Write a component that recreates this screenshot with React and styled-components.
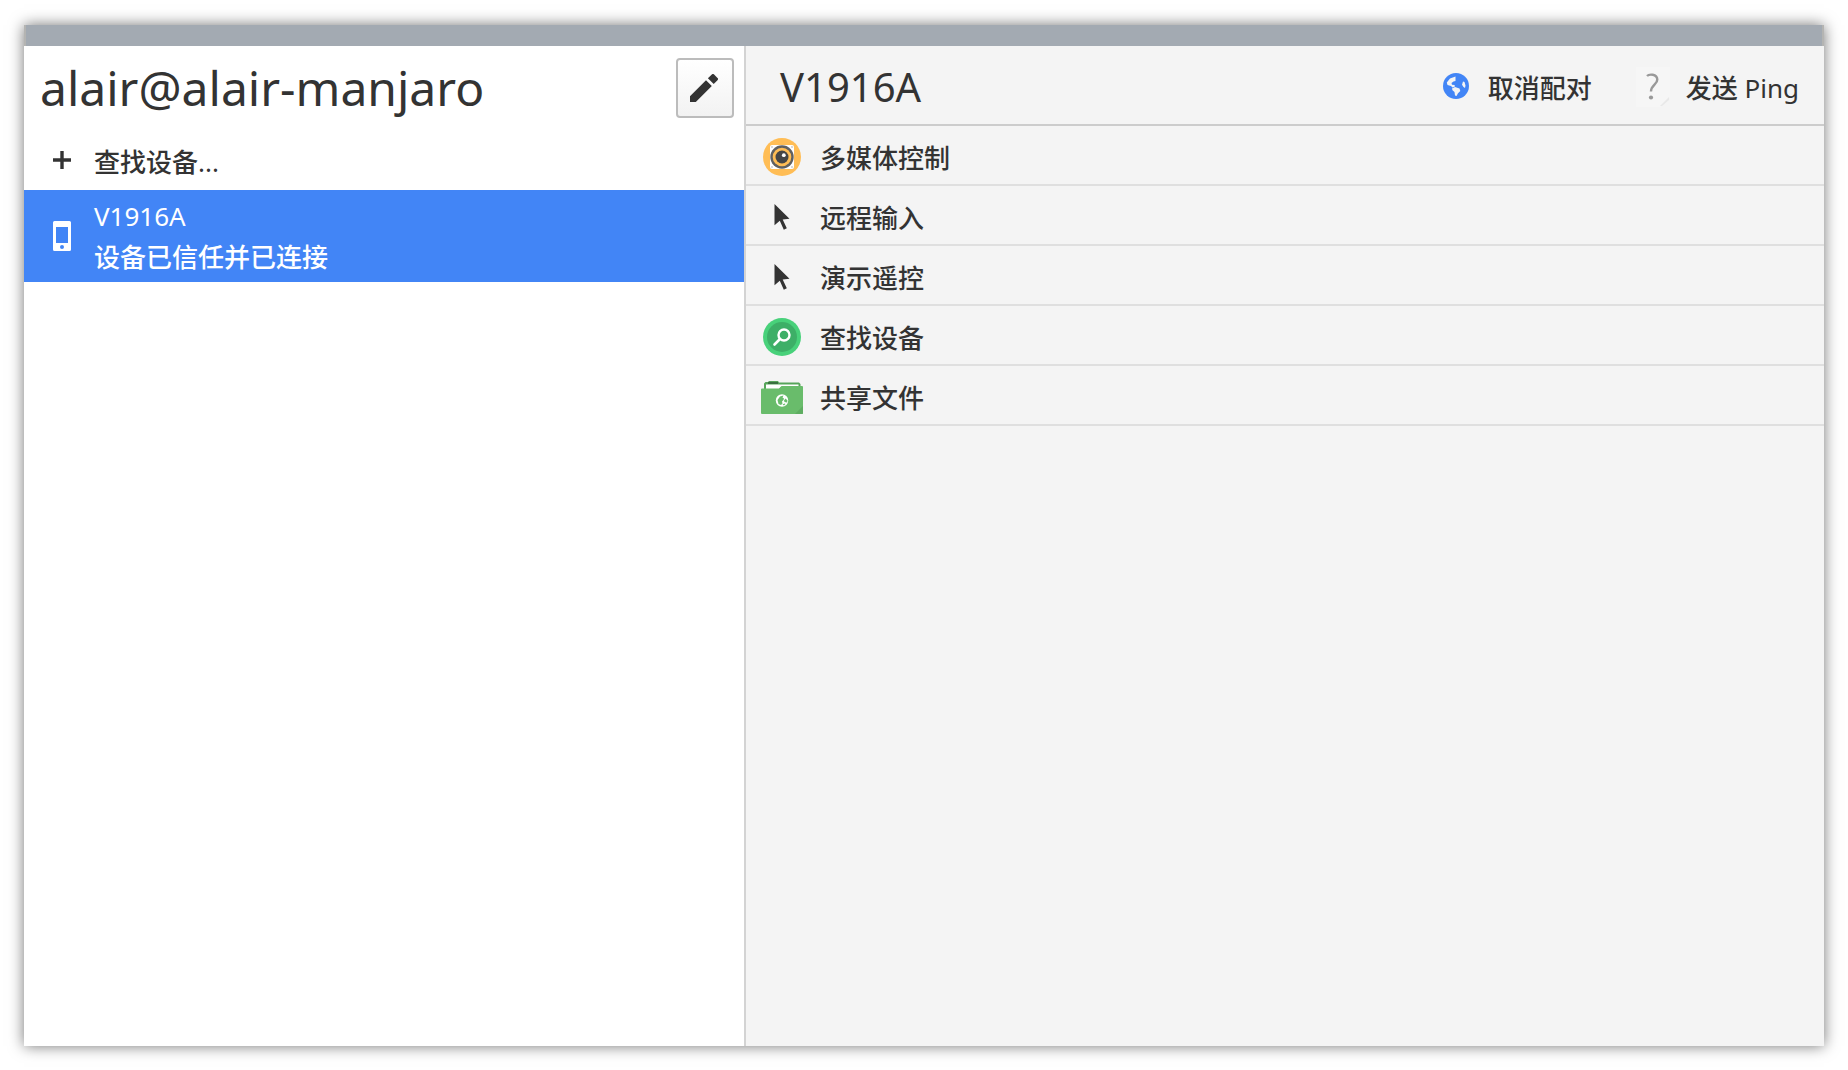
import React from "react";
import styled, { createGlobalStyle } from "styled-components";

const ink = "#333333";
const accent = "#4285f6";

const GlobalStyle = createGlobalStyle`
  *, *::before, *::after { box-sizing: border-box; }
  body {
    margin: 0;
    background: #ffffff;
    color: ${ink};
    font-family: "Noto Sans", "Noto Sans CJK SC", sans-serif;
    font-size: 26px;
    line-height: 40px;
  }
`;

const Desktop = styled.div`
  display: flex;
  min-height: 100vh;
  padding: 25px 24px 24px;
`;

const Window = styled.div`
  flex: 1;
  display: flex;
  flex-direction: column;
  box-shadow: 0 0 14px rgba(0, 0, 0, 0.55);
`;

const TitleBar = styled.header`
  height: 21px;
  background: #a3aab2;
  border: solid #b4b4b2;
  border-width: 0 2px;
`;

const Body = styled.div`
  flex: 1;
  display: grid;
  grid-template-columns: minmax(320px, 2fr) minmax(0, 3fr);
`;

const Sidebar = styled.aside`
  background: #ffffff;
`;

const Identity = styled.div`
  display: flex;
  align-items: center;
  justify-content: space-between;
  height: 88px;
  padding: 0 10px 4px 16px;
`;

const HostName = styled.h1`
  margin: 0;
  font-size: 48px;
  line-height: 64px;
  font-weight: 400;
`;

const EditButton = styled.button`
  display: flex;
  align-items: center;
  justify-content: center;
  width: 58px;
  height: 60px;
  padding: 0 2px 0 0;
  color: ${ink};
  border: 2px solid #bcbcbc;
  border-radius: 4px;
  background: linear-gradient(#ffffff, #f2f2f2);
`;

const List = styled.ul`
  margin: 0;
  padding: 0;
  list-style: none;
`;

const RowButton = styled.button`
  display: flex;
  align-items: center;
  width: 100%;
  border: 0;
  background: none;
  color: inherit;
  font: inherit;
  text-align: left;
`;

const DeviceButton = styled(RowButton)`
  gap: 10px;
  min-height: ${(p) => (p.$selected ? "92px" : "56px")};
  padding: ${(p) => (p.$selected ? "0 16px" : "0 16px 2px")};
  background: ${(p) => (p.$selected ? accent : "transparent")};
  color: ${(p) => (p.$selected ? "#ffffff" : ink)};
`;

const ActionButton = styled(RowButton)`
  gap: 16px;
  height: 60px;
  padding: 4px 14px 0;
  border-bottom: 2px solid #dfdfdf;
`;

const IconSlot = styled.span`
  display: flex;
  flex: none;
  justify-content: center;
  width: ${(p) => p.$width || 44}px;
`;

const Lines = styled.span`
  display: flex;
  flex-direction: column;
  line-height: 39px;
`;

const Label = styled.span`
  white-space: pre;
`;

const Han = styled.span`
  font-family: "Noto Sans CJK SC", sans-serif;
  font-weight: 500;
`;

const Detail = styled.main`
  background: #f4f4f4;
  border-left: 2px solid #d3d3d3;
`;

const DetailHeader = styled.div`
  display: flex;
  align-items: center;
  justify-content: space-between;
  height: 80px;
  padding: 4px 25px 0 34px;
  border-bottom: 2px solid #cccccc;
`;

const DeviceName = styled.h2`
  margin: 0;
  font-size: 40px;
  line-height: 56px;
  font-weight: 400;
`;

const Toolbar = styled.div`
  display: flex;
  gap: 44px;
`;

const ToolButton = styled.button`
  display: flex;
  align-items: center;
  gap: 16px;
  padding: 0;
  border: 0;
  background: none;
  color: inherit;
  font: inherit;
`;

const PencilIcon = () => (
  <svg width="28" height="28" viewBox="0 0 28 28" aria-hidden="true">
    <path fill="currentColor" d="M0 22.2V28h5.8L21.8 12 16 6.2zM17.9 4.3 21.8.5a1.6 1.6 0 0 1 2.3 0l3.4 3.4a1.6 1.6 0 0 1 0 2.3L23.7 10z" />
  </svg>
);

const PlusIcon = () => (
  <svg width="18" height="20" viewBox="0 0 18 20" aria-hidden="true">
    <path fill="currentColor" d="M7.3 0h3.4v7.3H18v3.4h-7.3V18H7.3v-7.3H0V7.3h7.3z" />
  </svg>
);

const PhoneIcon = () => (
  <svg width="18" height="30" viewBox="0 0 18 30" aria-hidden="true">
    <path fill="currentColor" fillRule="evenodd" d="M1.5 0h15A1.5 1.5 0 0 1 18 1.5v27a1.5 1.5 0 0 1-1.5 1.500h-15A1.5 1.5 0 0 1 0 28.500v-27A1.5 1.5 0 0 1 1.500 0zM3 6v16h12V6zM9 24a2 2 0 1 0 0 4 2 2 0 0 0 0-4z" />
  </svg>
);

const SpeakerIcon = () => (
  <svg width="38" height="38" viewBox="0 0 38 38" aria-hidden="true">
    <circle cx="19" cy="19" r="19" fill="#ffbd55" />
    <rect x="7" y="7" width="24" height="24" rx="2" fill="#ffffff" />
    <g fill="#aaaaaa">
      <circle cx="9" cy="9" r=".8" /><circle cx="29" cy="9" r=".8" />
      <circle cx="9" cy="29" r=".8" /><circle cx="29" cy="29" r=".8" />
    </g>
    <circle cx="19" cy="19" r="11.7" fill="#606060" />
    <circle cx="19" cy="19" r="9.3" fill="#ffbd55" />
    <circle cx="19" cy="19" r="6.5" fill="#464646" />
    <circle cx="20.8" cy="17.2" r="1.9" fill="#ffffff" />
  </svg>
);

const CursorIcon = () => (
  <svg width="16" height="26" viewBox="0 0 16 26" aria-hidden="true">
    <path fill={ink} d="M.5 0v21.200l5.300-4.400 4 8.900 3-1.400-4.100-8.800 6.800-.8z" />
  </svg>
);

const FindIcon = () => (
  <svg width="38" height="38" viewBox="0 0 38 38" aria-hidden="true">
    <circle cx="19" cy="19" r="19" fill="#48d17a" />
    <circle cx="19" cy="19" r="15" fill="#3daf67" />
    <path d="M16.500 21.500 11.500 26.500" stroke="#ffffff" strokeWidth="2.6" strokeLinecap="round" />
    <circle cx="21" cy="17" r="5.500" fill="none" stroke="#ffffff" strokeWidth="2.4" />
  </svg>
);

const FolderIcon = () => (
  <svg width="42" height="33" viewBox="0 0 42 33" aria-hidden="true">
    <path fill="#56a45a" d="M3 8V2.500L4.500 1H7l1-1h9l1 1.500h20L39.500 3v6H3z" />
    <path fill="#3a7040" d="M7 1h10v2H7z" />
    <path fill="#ffffff" d="M5 3.500h32.500V6H20l-2 2H5z" />
    <path fill="#69bc6b" d="M0 8.500Q0 7.500 1 7.500h17L20.500 5H41q1 0 1 1v26q0 1-1 1H1q-1 0-1-1z" />
    <path fill="#5aa65d" d="M42 25v8h-8z" opacity=".7" />
    <circle cx="21" cy="19.500" r="6.200" fill="#ffffff" />
    <path fill="#69bc6b" d="M22.500 14.500 19 15.500 16.500 19l1 4 2.500 1 1.500-1.500-.5-2 1.500-1.500.5-1.500-1.500-1zM24.500 17.500 23 19.500l.5 1.500 2.500.5.5-2zM21.500 23.500l2-1 1 .5-1.500 1.500z" />
  </svg>
);

const GlobeIcon = () => (
  <svg width="26" height="28" viewBox="0 0 26 28" aria-hidden="true">
    <circle cx="13" cy="13" r="13" fill={accent} />
    <path fill="#f4f4f4" d="M12.500 3.500 7 5.500 3.800 9.500 4.500 12l3.500 1 1.500 1.500 2.500-1-.5-1.500-2.500-.3-.5-1.700 2-1.500 2-.5z" />
    <path fill="#f4f4f4" d="m9 15.500 3-1.500 4.500 1.500.8 2.500-2.300 2.200-1.500 2.800-1.500-.5-.5-3.500-2-1.700zM20 8.500l1.500.5 1 3.500-.5 2.500-1.500-1-1.500-2.200z" />
  </svg>
);

const QuestionIcon = () => (
  <svg width="34" height="40" viewBox="0 0 34 40" aria-hidden="true">
    <path fill="#f6f6f6" d="M0 0h34v30L24 40H0z" />
    <path fill="#e8e8e8" d="M24 39 33 30v3l-7 6z" />
    <path fill="none" stroke="#999999" strokeWidth="2.400" d="M11 9c2-2 10-2.500 10.300 3.500.2 5-6.300 5.500-6.300 12" />
    <circle cx="15" cy="30.500" r="2.100" fill="#999999" />
  </svg>
);

const actions = [
  { label: "多媒体控制", Icon: SpeakerIcon },
  { label: "远程输入", Icon: CursorIcon },
  { label: "演示遥控", Icon: CursorIcon },
  { label: "查找设备", Icon: FindIcon },
  { label: "共享文件", Icon: FolderIcon },
];

export default function App() {
  return (
    <>
      <GlobalStyle />
      <Desktop>
        <Window>
          <TitleBar />
          <Body>
            <Sidebar>
              <Identity>
                <HostName>alair@alair-manjaro</HostName>
                <EditButton type="button" aria-label="编辑">
                  <PencilIcon />
                </EditButton>
              </Identity>
              <List>
                <li>
                  <DeviceButton type="button">
                    <IconSlot><PlusIcon /></IconSlot>
                    <Label><Han>查找设备</Han>...</Label>
                  </DeviceButton>
                </li>
                <li>
                  <DeviceButton type="button" $selected aria-current="true">
                    <IconSlot><PhoneIcon /></IconSlot>
                    <Lines>
                      <Label>V1916A</Label>
                      <Han>设备已信任并已连接</Han>
                    </Lines>
                  </DeviceButton>
                </li>
              </List>
            </Sidebar>
            <Detail>
              <DetailHeader>
                <DeviceName>V1916A</DeviceName>
                <Toolbar>
                  <ToolButton type="button">
                    <IconSlot $width={32}><GlobeIcon /></IconSlot>
                    <Han>取消配对</Han>
                  </ToolButton>
                  <ToolButton type="button">
                    <IconSlot $width={34}><QuestionIcon /></IconSlot>
                    <Label><Han>发送</Han> Ping</Label>
                  </ToolButton>
                </Toolbar>
              </DetailHeader>
              <List>
                {actions.map(({ label, Icon }) => (
                  <li key={label}>
                    <ActionButton type="button">
                      <IconSlot><Icon /></IconSlot>
                      <Han>{label}</Han>
                    </ActionButton>
                  </li>
                ))}
              </List>
            </Detail>
          </Body>
        </Window>
      </Desktop>
    </>
  );
}
